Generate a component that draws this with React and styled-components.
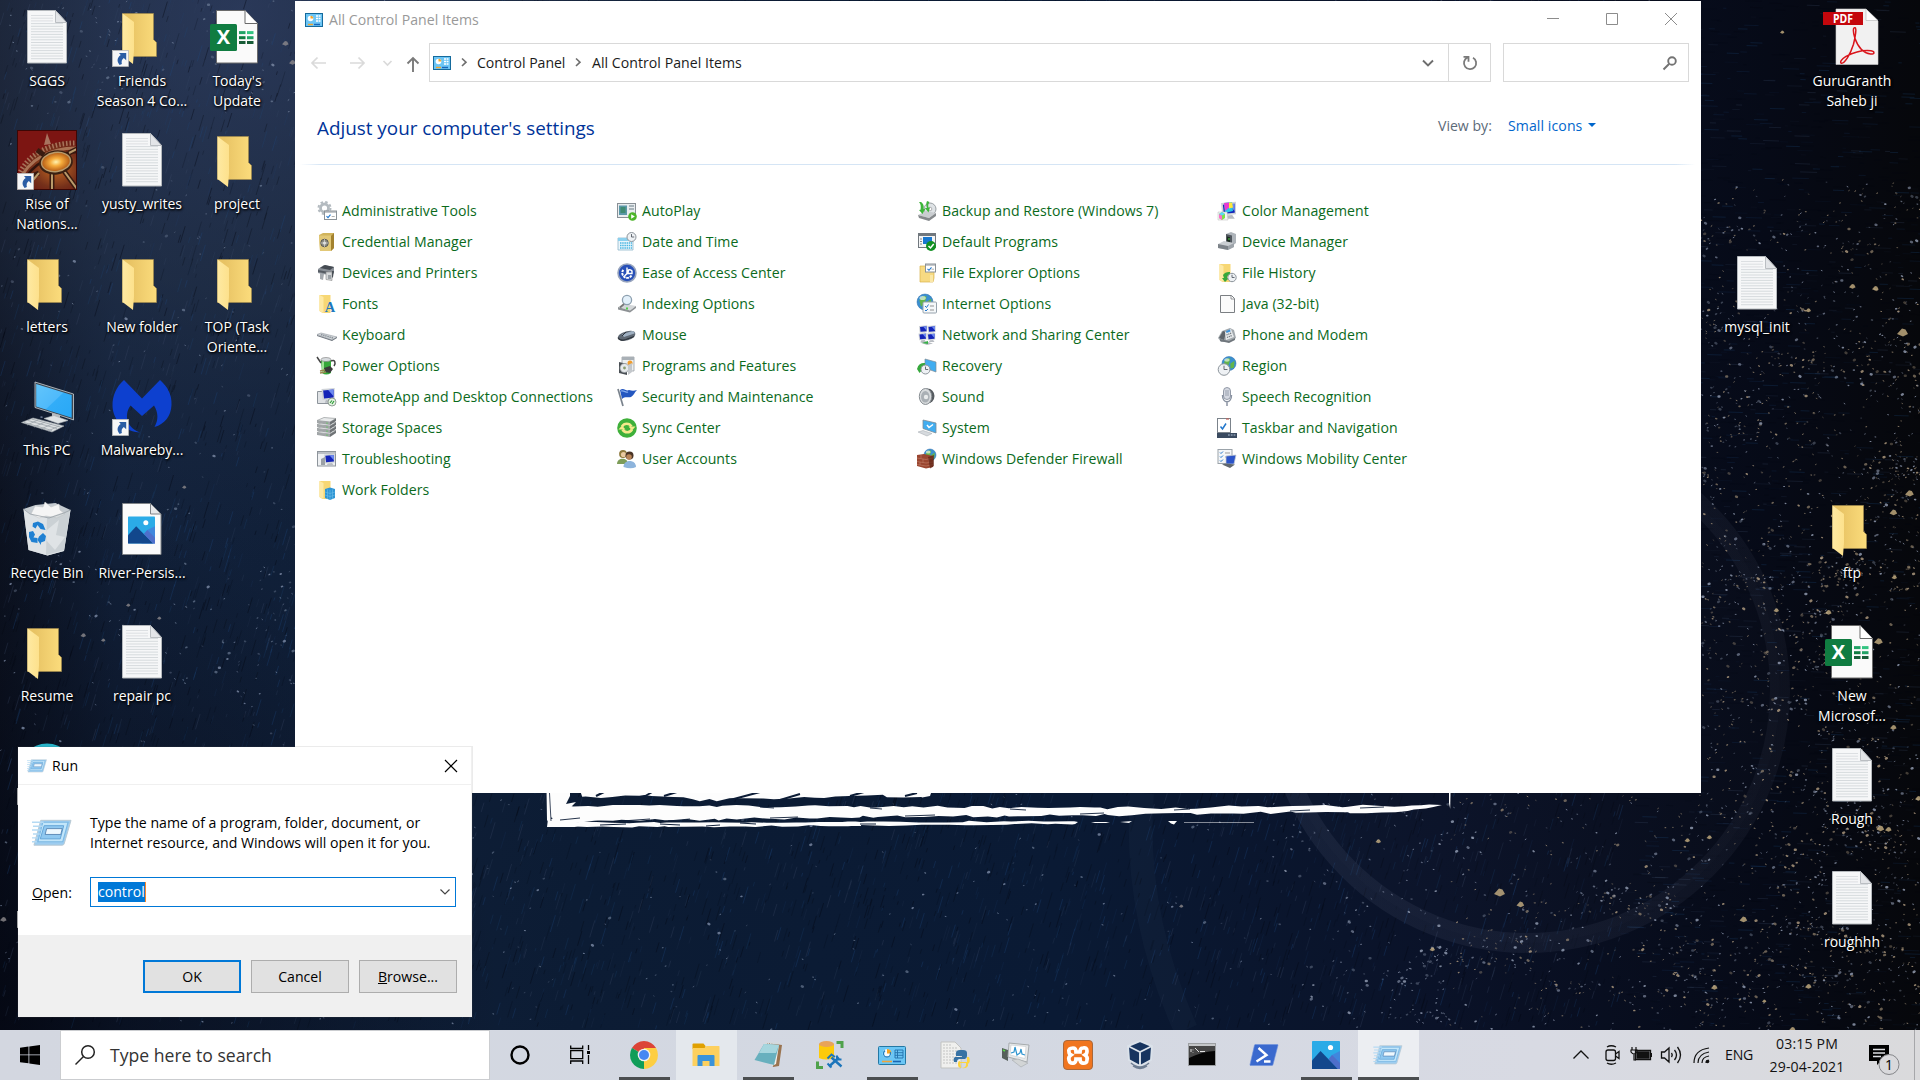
import React from "react";
import styled, { createGlobalStyle } from "styled-components";

const GlobalStyle = createGlobalStyle`
  * { box-sizing: border-box; }
  html, body { margin: 0; padding: 0; overflow: hidden; background: #060a16; }
  body { font-family: "Open Sans", "Noto Sans", sans-serif; font-size: 14.1px; line-height: 20px; color: #000; }
  svg { display: block; overflow: visible; flex: none; }
`;

/* ---------- wallpaper ---------- */

const Screen = styled.div`
  display: flex;
  flex-direction: column;
  width: 1920px;
  height: 1080px;
  overflow: hidden;
  position: relative;
`;

const WallpaperSvg = styled.svg`
  position: absolute;
  inset: 0;
`;

function seeded(seed) {
  let a = seed;
  return () => {
    a = (a + 0x6d2b79f5) | 0;
    let t = Math.imul(a ^ (a >>> 15), 1 | a);
    t = (t + Math.imul(t ^ (t >>> 7), 61 | t)) ^ t;
    return ((t ^ (t >>> 14)) >>> 0) / 4294967296;
  };
}

/* Stars and brush streaks are batched into one path per look. */
function buildSky() {
  const rnd = seeded(77);
  const stars = {};
  const addStar = (x, y, bias) => {
    const size = [0.9, 1.2, 1.7, 2.5][Math.floor(Math.pow(rnd(), bias) * 4)];
    const gold = x > 1450 && rnd() < 0.5;
    const key = `${gold ? "#b5a083" : x > 1250 ? "#98a2b8" : "#7d8ca6"}|${size}|${(0.35 + Math.floor(rnd() * 3) * 0.22).toFixed(2)}`;
    stars[key] = (stars[key] || "") + `M${x.toFixed(1)} ${y.toFixed(1)}l.8 ${((rnd() - 0.5) * 1.2).toFixed(1)}`;
  };
  for (let i = 0; i < 4600; i++) {
    const right = i % 4 !== 0;
    const x = right ? 1250 + Math.pow(rnd(), 0.7) * 670 : rnd() * 1250;
    const y = x > 1690 ? 180 + Math.pow(rnd(), 0.85) * 850 : rnd() * 1030;
    addStar(x, y, 3);
  }
  for (let c = 0; c < 110; c++) {
    const cx = 1400 + Math.pow(rnd(), 0.7) * 520;
    const cy = 190 + rnd() * 830;
    const n = 6 + rnd() * 16;
    for (let i = 0; i < n; i++) {
      addStar(cx + (rnd() + rnd() - 1) * 48, cy + (rnd() + rnd() - 1) * 12, 2.2);
    }
  }
  for (let c = 0; c < 16; c++) {
    const cx = 60 + rnd() * 240;
    const cy = c < 6 ? rnd() * 90 : 560 + rnd() * 130;
    for (let i = 0; i < 9; i++) addStar(cx + (rnd() - 0.5) * 60, cy + (rnd() - 0.5) * 36, 2.6);
  }
  const streaks = {};
  for (let i = 0; i < 13000; i++) {
    const x = rnd() * 1920;
    const y = rnd() * 1030;
    const l = 3 + rnd() * 14;
    const flat = x > 1620;
    const dx = flat ? l : l * 0.3;
    const dy = flat ? l * 0.03 : -l;
    const dark = rnd() < 0.45;
    const color = dark ? "#02060f" : rnd() < 0.6 ? "#1d4a80" : "#3a4a68";
    const key = `${color}|${(0.12 + Math.floor(rnd() * 3) * 0.09 + (dark ? 0.08 : 0) - (flat ? 0.05 : 0)).toFixed(2)}`;
    streaks[key] = (streaks[key] || "") + `M${x.toFixed(1)} ${y.toFixed(1)}l${dx.toFixed(1)} ${dy.toFixed(1)}`;
  }
  return { stars: Object.entries(stars), streaks: Object.entries(streaks) };
}

const sky = buildSky();

/* A ragged horizontal brush band between two interpolated edges. */
function band(seed, edge, jitter) {
  const rnd = seeded(seed);
  const at = (x, k) => {
    for (let i = 1; i < edge.length; i++) {
      const a = edge[i - 1];
      const b = edge[i];
      if (x <= b[0]) return a[k] + ((b[k] - a[k]) * (x - a[0])) / (b[0] - a[0]);
    }
    return edge[edge.length - 1][k];
  };
  const x0 = edge[0][0];
  const x1 = edge[edge.length - 1][0];
  const top = [];
  const bottom = [];
  for (let x = x0; x < x1; x += 5 + rnd() * 14) {
    top.push(`${x.toFixed(1)} ${(at(x, 1) + (rnd() - 0.5) * jitter).toFixed(1)}`);
    bottom.unshift(`${(x + rnd() * 6).toFixed(1)} ${(at(x, 2) + (rnd() - 0.5) * jitter).toFixed(1)}`);
  }
  return `M${top.join("L")}L${x1} ${at(x1, 1)}L${bottom.join("L")}z`;
}

const brush = [
  band(5, [[548, 805, 820], [572, 805.5, 820], [700, 806, 819.5], [860, 806.5, 817], [1000, 807.5, 816], [1150, 808, 814.5], [1300, 806, 812.5], [1400, 806, 812], [1442, 805, 805.5]], 2.8),
  band(9, [[549, 822.5, 826.5], [640, 822.5, 827], [760, 822, 826], [900, 822, 825.5], [1020, 821.5, 824], [1078, 822, 824]], 1.8),
  band(13, [[580, 790, 798], [640, 790, 796], [700, 790, 800], [760, 790, 799], [860, 790, 796], [932, 790, 796.5]], 3),
];

const goldFlecks = [
  [1499, 892, 5], [1520, 904, 3.5], [1909, 493, 4], [1893, 512, 3.5], [1902, 332, 5], [1894, 577, 2.5],
  [1776, 610, 2.5], [1828, 612, 3], [1878, 641, 4], [1893, 727, 3], [1743, 919, 3.5], [1714, 987, 3],
  [1808, 986, 3], [1764, 1001, 2], [1880, 828, 3.5], [1888, 829, 3], [1918, 798, 3], [1709, 837, 2.5],
  [1687, 840, 2.5], [1792, 1029, 3], [1432, 949, 2.5], [1181, 906, 2], [1378, 841, 2.5], [1808, 310, 2.5],
  [1875, 288, 3], [1852, 286, 3], [1782, 32, 2], [285, 43, 3], [292, 62, 3], [250, 54, 2], [3, 919, 3],
  [83, 635, 2.5], [103, 640, 2], [128, 605, 2], [159, 618, 2], [184, 487, 2], [254, 46, 2],
];

const Wallpaper = React.memo(function Wallpaper() {
  return (
    <WallpaperSvg width="1920" height="1080" viewBox="0 0 1920 1080">
      <defs>
        <linearGradient id="skyBase" x1="0" x2="1" y1="0" y2="0">
          <stop offset="0" stopColor="#0c1220" />
          <stop offset="0.06" stopColor="#12213a" />
          <stop offset="0.3" stopColor="#0c1c34" />
          <stop offset="0.55" stopColor="#0a1a34" />
          <stop offset="0.75" stopColor="#0a1228" />
          <stop offset="0.92" stopColor="#060a17" />
          <stop offset="1" stopColor="#06070b" />
        </linearGradient>
        <radialGradient id="skyTop" cx="240" cy="10" r="560" gradientUnits="userSpaceOnUse">
          <stop offset="0" stopColor="#38466a" stopOpacity="0.65" />
          <stop offset="0.5" stopColor="#2b3850" stopOpacity="0.5" />
          <stop offset="1" stopColor="#1d2b45" stopOpacity="0" />
        </radialGradient>
        <radialGradient id="skyCorner" cx="0" cy="1000" r="500" gradientUnits="userSpaceOnUse">
          <stop offset="0" stopColor="#030611" stopOpacity="0.8" />
          <stop offset="1" stopColor="#030611" stopOpacity="0" />
        </radialGradient>
        <linearGradient id="ringFade" x1="0" x2="1"><stop offset="0" stopColor="#8a93b0" stopOpacity="0.1" /><stop offset="1" stopColor="#8a93b0" stopOpacity="0.06" /></linearGradient>
      </defs>
      <rect width="1920" height="1080" fill="url(#skyBase)" />
      <rect width="1920" height="1080" fill="url(#skyTop)" />
      <rect width="1920" height="1080" fill="url(#skyCorner)" />
      {sky.streaks.map(([key, d]) => {
        const [c, o] = key.split("|");
        return <path key={key} d={d} stroke={c} strokeOpacity={o} strokeWidth="1" />;
      })}
      <circle cx="1527" cy="690" r="253" fill="#8a93b0" fillOpacity="0.02" stroke="url(#ringFade)" strokeWidth="20" />
      <path d="M1142 793C1136 870 1150 950 1186 1030" fill="none" stroke="#8a93b0" strokeOpacity="0.04" strokeWidth="24" />
      {sky.stars.map(([key, d]) => {
        const [c, w, o] = key.split("|");
        return <path key={key} d={d} stroke={c} strokeWidth={w} strokeOpacity={o} strokeLinecap="round" />;
      })}
      {goldFlecks.map(([x, y, r], i) => (
        <path key={i} d={`M${x - r} ${y + r * 0.4}l${r} ${-r * 1.1}l${r * 0.7} ${r * 0.2}l${r * 0.5} ${r * 0.9}l${-r} ${r * 0.5}z`} fill={x > 1200 ? "#c9b183" : "#8d8a8c"} opacity="0.8" />
      ))}
      <g fill="#fdfdfd">
        {brush.map((d) => <path key={d} d={d} />)}
        <path d="M546.500 790H570v6l-4 8 10-2-6 6h-14l-7 15-2-3z" />
        <path d="M548 819h60l-40 5 10 3-31 0z" />
        <path d="M1095 822l15 0-4 1-15 0zM1120 822l12-1-3 2zM1168 821l9 0-3 3.500-3-1zM1184 822h70v.600h-70z" />
        <path d="M1449 790h1.600l-.4 19-1.200-6z" />
      </g>
      <g stroke="#0c1c36" fill="none">
        <path d="M549.500 793l1.500 28" strokeWidth="0.800" />
        <path d="M575 798l-6 4M596 796l10-5M640 799l14-8M664 796l16-5M730 800l30-8M780 800l20-6M850 796l14-4M905 796l12-3" strokeWidth="2" />
        <path d="M560 820l20-2M622 821l28-2M690 819l-22 2M770 818l28-1M905 816l30-1M1080 814l24-1M870 808l12 1M1010 809l16 1M1190 809l-16 1M760 807l14 1M1290 811l20-1M1360 808l24-1" strokeWidth="0.900" />
        <path d="M600 825l26-1M660 824l20 1M706 826l14-1M740 823l16 1M860 824l16 0" strokeWidth="1" />
      </g>
    </WallpaperSvg>
  );
});

/* ---------- large desktop icons, 56 x 56 ---------- */

const ShortcutArrow = () => (
  <g>
    <rect x="-1.6" y="42.4" width="16" height="16" fill="#f7f7f7" stroke="#b9b9b9" strokeWidth="0.8" />
    <path d="M5 45h7.2v7.2l-2.4-2.3c-2 1.4-2.6 3.500-1.900 6l-2.300 1c-3-3.400-2.700-7 1.100-9.800z" fill="#2b5da4" />
  </g>
);

const TextDoc = () => (
  <g>
    <path d="M8.500 2.500h28l11 12v40.500h-39z" fill="#f6f7f8" stroke="#b4b8bc" strokeWidth="1" />
    <path d="M12 7.500h22M12 10.200h22M12 12.900h22" stroke="#dcdfe2" strokeWidth="1" />
    {[15.600, 18.300, 21, 23.700, 26.400, 29.100, 31.800, 34.500, 37.200, 39.900, 42.600, 45.300, 48, 50.700].map((y) => (
      <path key={y} d={`M12 ${y}h32`} stroke="#d6dadd" strokeWidth="1" />
    ))}
    <path d="M36.500 2.500v12h11z" fill="#e3e5e8" stroke="#b4b8bc" strokeWidth="0.900" />
  </g>
);

const FolderBig = () => (
  <g>
    <defs>
      <linearGradient id="fBack" x1="0" x2="1"><stop offset="0.200" stopColor="#e8c364" /><stop offset="1" stopColor="#fbdc7c" /></linearGradient>
      <linearGradient id="fFront" x1="0" x2="1"><stop offset="0" stopColor="#fee9a2" /><stop offset="1" stopColor="#fde18c" /></linearGradient>
    </defs>
    <path d="M8.500 5.500h31v26l3 3v14h-34z" fill="url(#fBack)" stroke="#a08a4e" strokeWidth="0.700" />
    <path d="M8.500 5.500l11.500 8.500v28l-1 14-10.500-8z" fill="url(#fFront)" />
  </g>
);

const ExcelDoc = () => (
  <g>
    <path d="M7.500 2.500h28.500l12.500 13v39.500h-41z" fill="#fafafa" stroke="#6a6a6a" />
    <path d="M36 2.500v13h12.500" fill="#fff" stroke="#6a6a6a" />
    <rect x="1" y="16" width="27" height="27" rx="1.500" fill="#107c41" />
    <text x="14.500" y="36.300" textAnchor="middle" fontSize="20" fontWeight="700" fill="#fff">X</text>
    <path d="M30 24.600h6.500" stroke="#21a366" strokeWidth="3" /><path d="M38 24.600h6.500" stroke="#33c481" strokeWidth="3" />
    <path d="M30 29.700h6.500" stroke="#107c41" strokeWidth="3" /><path d="M38 29.700h6.500" stroke="#21a366" strokeWidth="3" />
    <path d="M30 34.500h6.500M38 34.500h6.500" stroke="#185c37" strokeWidth="3" />
  </g>
);

const PdfDoc = () => (
  <g>
    <path d="M12 1h30l12 12v43.500H12z" fill="#f1f1f1" stroke="#d0d0d0" strokeWidth="0.600" />
    <path d="M42 1v11.500h12z" fill="#fff" stroke="#bbb" strokeWidth="0.700" />
    <rect x="-1" y="4" width="40" height="13" fill="#c4070c" />
    <text x="19" y="14.900" textAnchor="middle" fontSize="12" fontWeight="700" fill="#fff" textLength="20" lengthAdjust="spacingAndGlyphs">PDF</text>
    <path d="M31.500 20c-3-1.500-2.500 4.500-.5 10.500 3 8.500 8.500 14.500 15.500 15.500 4.500.600 4.500-2.600.500-3.200-7-.800-17 1.500-25 5.500-5 3-6.500 6.500-4.500 7 3.500.300 9-9.500 12-19 1.800-7.500 2.900-14.500 2-16.300z" fill="none" stroke="#d9151b" strokeWidth="1.500" />
  </g>
);

const RiseOfNations = () => (
  <g>
    <defs>
      <radialGradient id="ronBg" cx="0.650" cy="0.550" r="0.700"><stop offset="0" stopColor="#c46a24" /><stop offset="0.550" stopColor="#75301a" /><stop offset="1" stopColor="#661010" /></radialGradient>
      <radialGradient id="ronEye"><stop offset="0" stopColor="#fff3b0" /><stop offset="0.400" stopColor="#f6ac3c" /><stop offset="1" stopColor="#b35914" /></radialGradient>
      <clipPath id="ronClip"><rect x="-1.500" y="-0.500" width="59" height="59" /></clipPath>
    </defs>
    <g clipPath="url(#ronClip)">
      <rect x="-2" y="-1" width="60" height="60" fill="#7c1512" />
      <path d="M-2 52C4 26 28 8 58 10v50H-2z" fill="url(#ronBg)" />
      <path d="M0 44C8 24 30 11 60 12" fill="none" stroke="#a8735a" strokeWidth="5" strokeDasharray="1.500 2" />
      <path d="M1 49C9 30 30 16 60 17" fill="none" stroke="#a87254" strokeWidth="3" />
      <path d="M4 51C13 34 32 21 60 21" fill="none" stroke="#31140d" strokeWidth="2.500" />
      <path d="M25 14l3-12 4 11z" fill="#a8735f" />
      <path d="M20 42L2 50M33 42v18M45 40l13 18M25 24l-7-5M50 22l8-4" stroke="#3a1b10" strokeWidth="5" />
      <path d="M20 42L8 56M33 42v18M45 40l13 18M50 22l8-4" stroke="#b99a6a" strokeWidth="2" />
      <ellipse cx="37" cy="31.500" rx="17" ry="12" fill="#3a2012" transform="rotate(-8 37 32)" />
      <ellipse cx="37" cy="31" rx="14.500" ry="9.500" fill="url(#ronEye)" stroke="#b99a6a" strokeWidth="1.500" transform="rotate(-8 37 31)" />
    </g>
    <rect x="-1.500" y="-0.500" width="59" height="59" fill="none" stroke="#3c0705" />
    <ShortcutArrow />
  </g>
);

const ThisPc = () => (
  <g>
    <defs><linearGradient id="pcScr" x1="0" y1="0" x2="1" y2="1"><stop offset="0" stopColor="#62c5fb" /><stop offset="0.500" stopColor="#4fbafb" /><stop offset="0.520" stopColor="#32adf8" /><stop offset="1" stopColor="#29a8f6" /></linearGradient></defs>
    <path d="M16 5l38.500 12v26L52 42 16 30.500z" fill="#3d4650" stroke="#c9d0d4" strokeWidth="0.800" />
    <path d="M17.200 7l35.500 11v22.800L17.200 29.500z" fill="url(#pcScr)" />
    <path d="M33 36l8 2v5l-8-2z" fill="#b6bcc0" />
    <path d="M25 41.500l10-3 14 5-10 3z" fill="#dfe3e5" stroke="#a7adb2" strokeWidth="0.600" />
    <path d="M2.500 45.500L14 41l31 8-12 6z" fill="#dcdfe1" stroke="#a0a6ab" strokeWidth="0.600" />
    <path d="M5 45.500l28 8M9 43.500l29 8M12.500 42l29 8M8 48l11-5M15 50l11-5M22 52l11-5M29 54l11-5" stroke="#9ca3a9" strokeWidth="0.800" />
  </g>
);

const Malware = () => (
  <g>
    <path d="M10 3L28 21.500 46 3C54 10 58 18 57.500 28 57 39 51 47 40.500 50c4-7 4-14-.500-21.500L28 39 16.500 28.500C9 39 14 52 26.500 55.500 10 55-1 43-1.500 29-1.700 19 2 10 10 3z" fill="#0d40cf" />
    <ShortcutArrow />
  </g>
);

const RecycleBin = () => (
  <g>
    <path d="M4.500 9l12-4 20-2 15 7-6.500 41-16.500 4.500L9.500 50z" fill="#c5cbd0" />
    <path d="M4.500 9l6.500 5 19 4 15-5 6.500-3-6.500 41-16.500 4.500L9.500 50z" fill="#dfe3e6" />
    <path d="M12 14l4-8 8 1 2-5 6 5 8-3 1 6 5 4-8 4-11-2-7 2z" fill="#f5f5f5" stroke="#c4c8ca" strokeWidth="0.600" />
    <path d="M28 18l-1 37 18-5 6-40zM28 30l12-10-3 15 9 2-10 13-9-10z" fill="#b8bfc4" opacity="0.500" />
    <path d="M4.500 9l6.500 5 19 4 15-5 6.500-3" fill="none" stroke="#9ba2a8" strokeWidth="0.800" />
    <g fill="#1f80d2">
      <path d="M14 23l5-1.500 5 2.500 2.500 6-5-1-3-4-2 3.500-3-2z" />
      <path d="M10 32l4-1 2 3.500-1.500 3 4 .500v5l-6-1-2.500-5z" />
      <path d="M20 36.500l4-3.500 3 3-1 5-4 1.500v2.500l-3.500-5z" />
    </g>
  </g>
);

const PhotoDoc = () => (
  <g>
    <path d="M8.500 3.500h28l10.500 10.500v40.500H8.500z" fill="#fbfbfb" stroke="#808488" />
    <path d="M36.500 3.500V14H47z" fill="#e7e8ea" stroke="#808488" />
    <g transform="translate(14 16.500)"><Mountains size={27} /></g>
  </g>
);

const Mountains = ({ size }) => (
  <g transform={`scale(${size / 28})`}>
    <rect width="28" height="28" rx="0.800" fill="#2babe7" />
    <path d="M28 10v18H14L20 14z" fill="#4a78d8" opacity="0.700" />
    <path d="M0 19.500L8.500 10 26 28H0z" fill="#12478c" />
    <path d="M16.500 18l3.500-4 8 8v6H26z" fill="#4e6fcb" />
    <circle cx="18.500" cy="6.500" r="2.600" fill="#fff" />
  </g>
);

const TealApp = () => (
  <g>
    <circle cx="28" cy="26" r="28.500" fill="#28b3c8" />
    <ShortcutArrow />
  </g>
);

const HiddenShortcut = () => <ShortcutArrow />;
const FolderShortcut = () => (<g><FolderBig /><ShortcutArrow /></g>);

const desktopItems = [
  [1, 1, TextDoc, ["SGGS"]],
  [2, 1, FolderShortcut, ["Friends", "Season 4 Co..."]],
  [3, 1, ExcelDoc, ["Today's", "Update"]],
  [1, 2, RiseOfNations, ["Rise of", "Nations..."]],
  [2, 2, TextDoc, ["yusty_writes"]],
  [3, 2, FolderBig, ["project"]],
  [1, 3, FolderBig, ["letters"]],
  [2, 3, FolderBig, ["New folder"]],
  [3, 3, FolderBig, ["TOP (Task", "Oriente..."]],
  [1, 4, ThisPc, ["This PC"]],
  [2, 4, Malware, ["Malwareby..."]],
  [1, 5, RecycleBin, ["Recycle Bin"]],
  [2, 5, PhotoDoc, ["River-Persis..."]],
  [1, 6, FolderBig, ["Resume"]],
  [2, 6, TextDoc, ["repair pc"]],
  [1, 7, TealApp, []],
  [1, 8, HiddenShortcut, []],
  [20, 1, PdfDoc, ["GuruGranth", "Saheb ji"]],
  [19, 3, TextDoc, ["mysql_init"]],
  [20, 5, FolderBig, ["ftp"]],
  [20, 6, ExcelDoc, ["New", "Microsof..."]],
  [20, 7, TextDoc, ["Rough"]],
  [20, 8, TextDoc, ["roughhh"]],
];

const Desktop = styled.main`
  position: relative;
  height: 1030px;
  display: grid;
  grid-template-columns: repeat(20, 95px);
  grid-template-rows: repeat(8, 123px);
`;

const DesktopItem = styled.div`
  grid-column: ${(p) => p.$col};
  grid-row: ${(p) => p.$row};
  display: flex;
  flex-direction: column;
  align-items: center;
  padding: 8px 1px 0 0;
`;

const DesktopLabel = styled.div`
  margin-top: 7px;
  color: #fff;
  font-size: 14px;
  text-align: center;
  white-space: nowrap;
  text-shadow: 1px 1px 2px #000, 0 1px 3px #000;
`;

/* ---------- windows ---------- */

const WindowFrame = styled.section`
  position: absolute;
  left: ${(p) => p.$x}px;
  top: ${(p) => p.$y}px;
  width: ${(p) => p.$w}px;
  height: ${(p) => p.$h}px;
  background: #fff;
  display: flex;
  flex-direction: column;
`;

const TitleBar = styled.header`
  height: ${(p) => p.$h}px;
  display: flex;
  align-items: center;
  padding: 0 ${(p) => p.$right}px 0 ${(p) => p.$left}px;
`;

const TitleText = styled.h1`
  margin: 0 auto 0 ${(p) => p.$gap}px;
  font: inherit;
  letter-spacing: 0.04px;
  color: ${(p) => p.$color};
`;

const WindowButtons = styled.div`
  display: flex;
  gap: 47px;
  margin-top: -1px;
`;

const NavRow = styled.nav`
  display: flex;
  align-items: center;
  height: 39px;
  margin-top: 5px;
  padding: 0 12px 0 16px;
`;

const NavArrows = styled.div`
  display: flex;
  align-items: center;
  width: 118px;
`;

const AddressBar = styled.div`
  display: flex;
  align-items: center;
  width: 1020px;
  height: 39px;
  border: 1px solid #d9d9d9;
  padding: 0 14px 0 3px;
`;

const Crumb = styled.span`
  width: ${(p) => p.$w}px;
  flex: ${(p) => (p.$grow ? 1 : "none")};
  white-space: nowrap;
  color: #1b1b1b;
  letter-spacing: ${(p) => (p.$grow ? 0.04 : -0.04)}px;
`;

const CrumbChevron = styled.span`
  width: ${(p) => p.$w}px;
  display: flex;
  justify-content: center;
`;

const RefreshButton = styled.button`
  width: 42px;
  height: 39px;
  margin-right: 12px;
  padding: 0;
  border: 1px solid #d9d9d9;
  border-left: 0;
  background: #fff;
  display: grid;
  place-items: center;
`;

const SearchField = styled.div`
  width: 186px;
  height: 39px;
  border: 1px solid #d9d9d9;
  display: flex;
  align-items: center;
  justify-content: flex-end;
  padding-right: 11px;
`;

const HeadingRow = styled.div`
  display: flex;
  align-items: center;
  height: 82px;
  padding: 10px 0 0 22px;
`;

const Heading = styled.h2`
  margin: 0;
  width: 1121px;
  font-size: 18.850px;
  line-height: 28px;
  font-weight: 400;
  color: #003399;
`;

const ViewBy = styled.span`
  width: 70px;
  margin-top: -5px;
  color: #5c6a78;
`;

const ViewLink = styled.a`
  display: flex;
  align-items: center;
  gap: 6px;
  margin-top: -5px;
  color: #0066cc;
  letter-spacing: 0.08px;
`;

const Caret = styled.i`
  border: 4px solid transparent;
  border-top-color: #0066cc;
  border-bottom: 0;
  margin-top: -2px;
`;

const Rule = styled.div`
  height: 1px;
  background: linear-gradient(90deg, #fff 5px, #d5e5f5 26px, #d5e5f5 1380px, #fff 1400px);
`;

const ItemGrid = styled.ul`
  list-style: none;
  margin: 30px 0 0;
  padding: 0 0 0 22px;
  display: grid;
  grid-template-columns: repeat(4, 300px);
  grid-auto-rows: 31px;
`;

const Item = styled.li`
  display: flex;
  align-items: center;
  gap: 5px;
  color: #0b6a1c;
  letter-spacing: 0.05px;
  white-space: nowrap;
`;

/* ---------- control panel item icons, 20 x 20 ---------- */

const CpGlyph = () => (
  <g>
    <rect x="0.500" y="0.500" width="17" height="13" fill="#6cc5f5" stroke="#156a9c" />
    <circle cx="5.500" cy="5.500" r="2.800" fill="#fff" /><path d="M5.500 5.500V2.700a2.800 2.800 0 0 1 2.800 2.800z" fill="#f7a62b" />
    <path d="M11 3h4.500M11 5.500h4.500M11 8h4.500" stroke="#fff" strokeWidth="1.300" strokeDasharray="2 .6" />
    <path d="M3 11.500h5" stroke="#f7a62b" strokeWidth="1.400" /><path d="M9 11.500h6" stroke="#1a66b8" strokeWidth="1.400" />
  </g>
);

const MiniFolder = () => (
  <g><path d="M2.500 1h11v18h-8l-3-2z" fill="#f7d774" /><path d="M2.500 1l4 2v16l-4-2z" fill="#fee9a4" /></g>
);
const MiniMonitor = ({ x = 0, y = 0, s = 1 }) => (
  <g transform={`translate(${x} ${y}) scale(${s})`}><path d="M0 0l12-1v10l-11 1z" fill="#cfd3d8" /><path d="M1.500 1.300L11 .5v7.300L2.300 8.600z" fill="#1424b8" /><path d="M6 .9l5-.4v6z" fill="#6e8af0" /><path d="M4 10l5-.5 2 3H3z" fill="#b8bcc2" /></g>
);
const MiniGlobe = ({ cx, cy, r }) => (
  <g><circle cx={cx} cy={cy} r={r} fill="#3a8fd0" stroke="#2a6da8" strokeWidth="0.500" /><path d={`M${cx - r * 0.7} ${cy - r * 0.2}q${r * 0.3}-${r * 0.7} ${r * 0.9}-${r * 0.5}l-${r * 0.2} ${r * 0.8}-${r * 0.5} ${r * 0.5}zM${cx + r * 0.2} ${cy}l${r * 0.6}-${r * 0.4}-${r * 0.1} ${r}-${r * 0.5} ${r * 0.1}z`} fill="#63b54b" /><ellipse cx={cx - r * 0.3} cy={cy - r * 0.5} rx={r * 0.4} ry={r * 0.25} fill="#fff" opacity="0.600" /></g>
);
const MiniClock = ({ cx, cy, r }) => (
  <g><circle cx={cx} cy={cy} r={r} fill="#eef1f4" stroke="#8c949b" strokeWidth="1" /><path d={`M${cx} ${cy - r * 0.65}V${cy}h${r * 0.6}`} stroke="#555c64" strokeWidth="0.900" fill="none" /></g>
);
const MiniPage = ({ x, y, w, h }) => (
  <g><rect x={x} y={y} width={w} height={h} fill="#fff" stroke="#8b9298" /><path d={`M${x} ${y + 1}h${w}`} stroke="#8b9298" /><path d={`M${x + 2} ${y + h * 0.6}l1.500 1.500 2.500-3`} stroke="#2277cc" strokeWidth="1.100" fill="none" /><path d={`M${x + w * 0.6} ${y + h * 0.65}h${w * 0.25}`} stroke="#999" strokeWidth="0.800" /></g>
);
const MiniServer = ({ y }) => (
  <g><path d={`M0 ${y + 2}l7-3 12 1-6 3.500z`} fill="#e8eaeb" stroke="#85898c" strokeWidth="0.600" /><path d={`M0 ${y + 2}l13 1.500v3L0 ${y + 4.500}z`} fill="#a2a6a8" /><path d={`M13 ${y + 3.500}l6-3.500v2.500l-6 4z`} fill="#6e7275" /><circle cx="10" cy={y + 4.600} r="0.700" fill="#4fd04a" /></g>
);

const glyphs = {
  "Administrative Tools": <g><circle cx="7.500" cy="7" r="4" fill="none" stroke="#b4bbc0" strokeWidth="2.800" /><circle cx="7.500" cy="7" r="6" fill="none" stroke="#b4bbc0" strokeWidth="2" strokeDasharray="2.500 2.210" /><MiniPage x={7.500} y={10} w={12} h={8.500} /></g>,
  "AutoPlay": <g><rect x="0.500" y="2.500" width="18" height="14" fill="#e9edf0" stroke="#899096" /><rect x="2" y="4.500" width="8" height="9.500" fill="#5a98a8" /><rect x="3.500" y="6" width="5" height="6" fill="#3f8a72" /><path d="M12 5h5M12 8h5" stroke="#a8b4ba" strokeWidth="2" /><circle cx="15.500" cy="15.500" r="4.300" fill="#4db52a" /><path d="M14.200 13.300v4.400l3.600-2.200z" fill="#fff" /></g>,
  "Backup and Restore (Windows 7)": <g><circle cx="13" cy="8" r="6" fill="#dfe3e6" stroke="#9aa0a4" /><circle cx="13" cy="8" r="1.800" fill="#fff" stroke="#888" strokeWidth="0.600" /><path d="M1 14l8-4 10 2-7 5z" fill="#c9cdd0" /><path d="M1 14l11 3v3L2 17zM12 17l7-5v3l-7 5z" fill="#85898c" /><path d="M4 1c3 2 3 5 2.500 7l2-.5-3 5.500-3.500-4 1.500-.3C4 6 4 3 2 1zM10 0c-1 2-1 5 0 7l-2 0 3.500 4.500L13 6.500l-1.500.3C11 5 11 3 12.500 1z" fill="#3cb53a" /></g>,
  "Color Management": <g><MiniMonitor x={4} y={2} s={1.25} /><path d="M7 2l8-1 1 9-8 2z" fill="#29c4e8" /><path d="M7 2l5-.5v5L8 10z" fill="#ec3ad0" /><path d="M12 1.500l3 0 1 5-4 1z" fill="#ffe63a" /><path d="M1 11h9l1 8H1z" fill="#f4f4f4" stroke="#bbb" strokeWidth="0.500" /><path d="M2 13l3-2 3 2v4l-3 2-3-2z" fill="#7ee04a" /><path d="M2 13l3 1.500V19l-3-2z" fill="#ff6cc8" /><path d="M5 11l3 2-3 1.500L2 13z" fill="#5cd7f7" /></g>,
  "Credential Manager": <g><path d="M2 3l4-2h11v15l-3 3H3z" fill="#d1b45c" /><path d="M14 4l3-3v15l-3 3z" fill="#a3822f" /><path d="M2 3.500h12V19H3z" fill="#e2c877" /><circle cx="7.500" cy="11" r="3.800" fill="#8b8a82" stroke="#5b5a55" /><circle cx="7.500" cy="11" r="1.500" fill="#e8e8e8" /><path d="M7.500 7v8M3.500 11h8" stroke="#ddd" strokeWidth="0.600" /></g>,
  "Date and Time": <g><path d="M1 6h15v12H1z" fill="#eaf6fc" stroke="#8fb6ca" strokeWidth="0.800" /><path d="M1 6h15v3H1z" fill="#8bd0ee" /><path d="M3 11h12M3 13.500h12M3 16h12" stroke="#49b6e2" strokeWidth="1.600" strokeDasharray="1.500 .7" /><MiniClock cx={14.500} cy={5} r={4.500} /></g>,
  "Default Programs": <g><rect x="1.500" y="1.500" width="17" height="14" fill="#f4f5f6" stroke="#71787e" /><path d="M1 3h18" stroke="#71787e" strokeWidth="2" /><path d="M3 7h2M3 9.500h2M3 12h2" stroke="#888" /><rect x="6" y="5" width="9" height="7" fill="#1878d0" /><circle cx="14" cy="14" r="5" fill="#119022" /><path d="M11.500 14l2 2 3.200-4" stroke="#fff" strokeWidth="1.500" fill="none" /></g>,
  "Device Manager": <g><path d="M9 2l5-2 5 2v9l-4 3-6-2z" fill="#aeb4ba" /><path d="M9 2l6 1.500V13l-6-1.500z" fill="#50575e" /><path d="M10 4.500l3 .7v5l-3-.8z" fill="#1c2a20" /><path d="M12 6v2" stroke="#4fd04a" /><path d="M1 12l6-3 10 2v4l-6 3L1 16z" fill="#caced2" /><path d="M1 12l10 2v4L1 16z" fill="#7c8288" /><path d="M11 14l6-3v4l-6 3z" fill="#9da3a9" /></g>,
  "Devices and Printers": <g><path d="M1 6l6-4 10 2v6l-3 2-9-1-4-1z" fill="#8a9097" /><path d="M3 5l5-3 9 2-4 3z" fill="#454b52" /><path d="M1 7l11 2v2L1 9z" fill="#565c63" /><path d="M3 10l4 1-1 6-3-1z" fill="#a4a9ae" /><path d="M9 9h6v8.500l-6-1z" fill="#d5d8da" stroke="#888" strokeWidth="0.600" /><path d="M11 12h3v4h-3z" fill="#9ba1a6" /><path d="M15 8l2 0-1 6-1 1z" fill="#4a5057" /></g>,
  "Ease of Access Center": <g><circle cx="10" cy="10" r="9" fill="#2850b8" stroke="#97a4bd" strokeWidth="1.600" /><path d="M6.300 6.800A5 5 0 1 0 14.500 12.500" fill="none" stroke="#fff" strokeWidth="1.900" strokeDasharray="2.600 .7" /><path d="M10 4.500v6h3.500M11.500 7q2-1 3.500 1v2.500h-4z" stroke="#fff" strokeWidth="1.400" fill="none" /><path d="M10 10.500l-2.500 2.500" stroke="#fff" strokeWidth="1.400" /></g>,
  "File Explorer Options": <g><path d="M3 3h14v12l-1 4H3z" fill="#f7da82" stroke="#d8b24c" strokeWidth="0.700" /><path d="M13 12h3v7h-3z" fill="#fbe8a8" /><MiniPage x={8.500} y={1} w={10} h={8} /></g>,
  "File History": <g><MiniFolder /><path d="M6 12a7 6 0 0 1 7-3v3c-2 0-3 1-3 3l2 0-4 4-3-4h2z" fill="#36a83c" /><MiniClock cx={15} cy={14.500} r={4.200} /></g>,
  "Fonts": <g><MiniFolder /><text x="13" y="17.500" textAnchor="middle" fontFamily="Liberation Serif" fontSize="14.500" fontWeight="700" fill="#1d78bd">A</text></g>,
  "Indexing Options": <g><path d="M1 13l7-3 11 2-6 4.500z" fill="#d4d7d9" /><path d="M1 13l12 3.500v2L1 15.500zM13 16.500l6-4.500v2l-6 4.500z" fill="#8d9194" /><circle cx="10" cy="6" r="4.600" fill="#e3f0fa" stroke="#8da0b0" strokeWidth="1.300" /><path d="M7 10l-4 3.500" stroke="#777" strokeWidth="1.800" /><path d="M10 13.500v2" stroke="#4fd04a" strokeWidth="2" /></g>,
  "Internet Options": <g><MiniGlobe cx={8} cy={8} r={8} /><rect x="6" y="8" width="13.500" height="11" rx="1" fill="#f5f8fa" stroke="#96a2ac" /><path d="M8 12l1.500 1.500 2-3M8 16l1 1 2-2" stroke="#2277cc" fill="none" /><path d="M13 12h4M13 16h4" stroke="#888" strokeWidth="0.900" /></g>,
  "Java (32-bit)": <g><path d="M3.500 1.500h11l3 3v14h-14z" fill="#fbfbfb" stroke="#7b7f83" /><path d="M14 1.500V5h3.500" fill="none" stroke="#7b7f83" strokeWidth="0.800" /></g>,
  "Keyboard": <g><path d="M0 9.500l4-1.500 16 4-5 3z" fill="#d4d8db" stroke="#9097a0" strokeWidth="0.600" /><path d="M0 10l15 5 5-3v1l-5 3L0 11z" fill="#6d757d" /><path d="M4 9.500l12 3.500" stroke="#8c949c" strokeDasharray="1.500 .7" strokeWidth="1.500" /></g>,
  "Mouse": <g><path d="M1 12c0-3 10-7 14-6 4 0 4 4 2 6-3 3-9 4-12 4-3-1-4-2-4-4z" fill="#5f6873" /><path d="M5 9.500l10-3.500c2 0 3 1 2.500 2.500L7 12z" fill="#9fb0c2" /><path d="M1 12.500c1 3 5 3 8 2l8-3" stroke="#2d333a" strokeWidth="1.300" fill="none" /><path d="M9 7l-4 4" stroke="#2d333a" /></g>,
  "Network and Sharing Center": <g><MiniMonitor x={2} y={1} s={0.680} /><MiniMonitor x={10.500} y={1} s={0.680} /><MiniMonitor x={1.500} y={8.500} s={0.680} /><MiniMonitor x={10} y={8.500} s={0.680} /><path d="M3 17.500l6-1 7 2-6 1.500z" fill="#b8bcc2" /><path d="M5 18l6-2v3z" fill="#38b048" /></g>,
  "Phone and Modem": <g><path d="M1 13l4-7 8-3 4 2 2 8-6 4-9 0z" fill="#a3a9ae" /><path d="M2 13l4-7 3 1-2 8z" fill="#5d646b" /><path d="M8 7l6-3 3 8-8 3z" fill="#e6e9eb" /><path d="M9 6l4-1.500.5 2L9.500 8z" fill="#3b90d8" /><path d="M9.500 10l5-2M10 12.500l5-2" stroke="#6d757c" strokeWidth="1.200" strokeDasharray="1.200 .7" /><path d="M3 14l9 2 6-3v2l-6 3-9-2z" fill="#6f767c" /></g>,
  "Power Options": <g><path d="M4 4q5-3 10 0v13q-5 3-9 0z" fill="#35a83a" /><path d="M6 4v13" stroke="#a9e8a0" strokeWidth="1.800" /><ellipse cx="9" cy="3.500" rx="5" ry="2" fill="#d8dcdf" stroke="#777" strokeWidth="0.600" /><path d="M0 1l4 6M14 5c4-2 5 2 3 5" stroke="#444" strokeWidth="1.500" fill="none" /><path d="M7 12l6-2 3 3-3 4-5-1z" fill="#3b3b3b" /><path d="M3 15l5-1M3 17l6-1" stroke="#9a8850" strokeWidth="1.300" /></g>,
  "Programs and Features": <g><path d="M5 1h12v14H5z" fill="#eceff0" stroke="#9aa0a5" strokeWidth="0.800" /><path d="M5 1h12v3H5z" fill="#a9b0b6" /><circle cx="13" cy="7" r="2.500" fill="#f09c2c" /><path d="M2 6l8 2v11l-8-2z" fill="#4a4f55" /><circle cx="7.500" cy="12" r="4.500" fill="#e6e9eb" stroke="#8f959a" strokeWidth="0.700" /><circle cx="7.500" cy="12" r="1.400" fill="#8a9c70" /><path d="M11 9l4-2v9l-4 3z" fill="#c4c8cc" /></g>,
  "Recovery": <g><path d="M8 3l11 3v10L8 12z" fill="#41adf0" stroke="#7f8c96" strokeWidth="0.700" /><path d="M0 13a7 7 0 0 1 8-6v3c-3 0-4 2-4 3h2l-3.500 4z" fill="#36a83c" /><MiniClock cx={8.500} cy={13.500} r={4.500} /></g>,
  "Region": <g><MiniGlobe cx={12} cy={7.500} r={7} /><MiniClock cx={7} cy={13.500} r={5.800} /></g>,
  "RemoteApp and Desktop Connections": <g><path d="M.5 4.500h14v12H.500z" fill="#dfe2e5" stroke="#8d949b" /><MiniMonitor x={4.500} y={2} s={1.100} /><circle cx="15" cy="15" r="4" fill="#e3f2e1" stroke="#7d8a83" strokeWidth="0.800" /><path d="M13 16l2-2.500M15 17l2-3" stroke="#2f9d38" strokeWidth="1.200" /></g>,
  "Security and Maintenance": <g><path d="M1 2l5 17" stroke="#79828c" strokeWidth="1.700" /><path d="M3 3c4-3 6 2 9 0 3 1 5 1 8 0-3 3-3 5-6 7-3 1-6-1-9 2z" fill="#2457c0" /><path d="M4 4c3-1 5 2 7 1" stroke="#86aef0" strokeWidth="1.200" fill="none" /></g>,
  "Sound": <g><ellipse cx="10.500" cy="9" rx="7" ry="7.500" fill="#565b60" /><ellipse cx="8.500" cy="9.500" rx="6.200" ry="8" fill="#d8dbdd" stroke="#888e93" /><ellipse cx="8.300" cy="9.800" rx="4.300" ry="5.800" fill="#aab0b5" /><circle cx="9" cy="10" r="2.200" fill="#e9ebec" /></g>,
  "Speech Recognition": <g><rect x="6.500" y="0.500" width="7" height="12" rx="3.500" fill="#d5d9e2" stroke="#7c8594" strokeWidth="0.800" /><path d="M8 4h4M8 6h4M8 8h4" stroke="#98a0ae" /><path d="M5.500 8c0 9 9 9 9 0M10 15v4" stroke="#8a93a2" strokeWidth="1.500" fill="none" /></g>,
  "Storage Spaces": <g><MiniServer y={12.500} /><MiniServer y={8.500} /><MiniServer y={4.500} /><MiniServer y={0.500} /></g>,
  "Sync Center": <g><circle cx="10" cy="10" r="9.800" fill="#3fb03a" /><path d="M5 8.500a5.500 5.500 0 0 1 9.500 0M15 11.500a5.500 5.500 0 0 1-9.500 0" fill="none" stroke="#f6e98c" strokeWidth="2.500" /><path d="M11.500 8.500h7l-3.500 4zM8.500 11.500h-7l3.500-4z" fill="#f6e98c" /></g>,
  "System": <g><path d="M6 2l13 3v10L6 10.500z" fill="#41adf0" stroke="#7f8c96" strokeWidth="0.800" /><path d="M10 7l2 2.500 4-3" stroke="#fff" strokeWidth="1.500" fill="none" /><path d="M1 14l5-1.500 9 3-5 2.500z" fill="#d6dade" stroke="#a0a7ad" strokeWidth="0.500" /></g>,
  "Taskbar and Navigation": <g><rect x="0.500" y="0.500" width="13" height="14" fill="#fff" stroke="#7b838b" /><path d="M3.500 8.500l2 2.500 3.500-5.500" stroke="#2277cc" strokeWidth="1.500" fill="none" /><path d="M9 1h3" stroke="#c06058" strokeWidth="1.200" /><path d="M0 15h20v5H0z" fill="#3a4a60" /><path d="M11 17h8" stroke="#8a9ab0" strokeWidth="1.600" strokeDasharray="1.800 1" /></g>,
  "Troubleshooting": <g><rect x="0.500" y="2.500" width="18" height="14.500" fill="#eef0f2" stroke="#8d949b" /><path d="M1 4h18" stroke="#aab0b7" strokeWidth="1.500" /><MiniMonitor x={7} y={5.500} s={0.900} /><path d="M4 10l4-2v8H4z" fill="#9aa0a6" /></g>,
  "User Accounts": <g><circle cx="6" cy="5" r="3.900" fill="#8f7a3e" /><circle cx="6.500" cy="5.500" r="2.600" fill="#e9c9a0" /><path d="M0 15c0-7 11-7 11 0z" fill="#7d9c58" /><circle cx="12.500" cy="6.500" r="4" fill="#4a3426" /><circle cx="12" cy="8" r="2.800" fill="#b88458" /><path d="M6.500 18c0-8 12.500-8 12.500 0q-5 2.500-12.500 0z" fill="#8db4dc" /></g>,
  "Windows Defender Firewall": <g><MiniGlobe cx={13} cy={6} r={6} /><path d="M0 6l7-1 9 2v11l-7 1.500L0 17z" fill="#9a4630" /><path d="M0 9l9 1.500 7-1.500M0 12.500l9 1.500 7-1M0 15.500l9 1.500 7-1.500M4 6v3.500M6 10v3.500M3 13v3M12 9v4" stroke="#c98a74" strokeWidth="0.500" fill="none" /><path d="M11 8l6-2v11l-4 2.500z" fill="#5e2416" opacity="0.700" /></g>,
  "Windows Mobility Center": <g><rect x="1" y="0.500" width="14" height="14" fill="#f4f6f8" stroke="#9ba3aa" /><path d="M3 3.500l1 1 2-2M3 7.500l1 1 2-2M3 11.500l1 1 2-2" stroke="#2277cc" fill="none" /><path d="M8 4h5M8 8h3" stroke="#999" /><path d="M9 7l10-1-2 9-8 0z" fill="#2b54c8" stroke="#c5cbd0" strokeWidth="0.700" /><path d="M5 15.500l4-1 9 1-5 3.500z" fill="#5f676e" /></g>,
  "Work Folders": <g><MiniFolder /><path d="M8 9l5-1.500 5 1.500v9l-5 2-5-2z" fill="#2f95d4" /><path d="M8 12l5 1.500 5-1.500M8 15l5 1.500 5-1.500M13 10v10M10.500 9.500v9.500M15.500 9.500v9.500" stroke="#6bbde8" strokeWidth="0.600" fill="none" /></g>,
};

const itemRows = [
  "Administrative Tools", "AutoPlay", "Backup and Restore (Windows 7)", "Color Management",
  "Credential Manager", "Date and Time", "Default Programs", "Device Manager",
  "Devices and Printers", "Ease of Access Center", "File Explorer Options", "File History",
  "Fonts", "Indexing Options", "Internet Options", "Java (32-bit)",
  "Keyboard", "Mouse", "Network and Sharing Center", "Phone and Modem",
  "Power Options", "Programs and Features", "Recovery", "Region",
  "RemoteApp and Desktop Connections", "Security and Maintenance", "Sound", "Speech Recognition",
  "Storage Spaces", "Sync Center", "System", "Taskbar and Navigation",
  "Troubleshooting", "User Accounts", "Windows Defender Firewall", "Windows Mobility Center",
  "Work Folders",
];

const Chevron = () => (
  <svg width="6" height="10" fill="none" stroke="#6e6e6e" strokeWidth="1.600"><path d="M1 .500l4 3.700L1 8" /></svg>
);

function ControlPanel() {
  return (
    <WindowFrame $x={295} $y={1} $w={1406} $h={792}>
      <TitleBar $h={37} $left={10} $right={24}>
        <svg width="18" height="14"><CpGlyph /></svg>
        <TitleText $gap={6} $color="#999">All Control Panel Items</TitleText>
        <WindowButtons>
          <svg width="12" height="12" stroke="#8c8c8c" fill="none"><path d="M0 5.500h12" /></svg>
          <svg width="12" height="12" stroke="#8c8c8c" fill="none"><path d="M.5.500h11v11H.500z" /></svg>
          <svg width="12" height="12" stroke="#8c8c8c" fill="none"><path d="M0 0l12 12M12 0L0 12" /></svg>
        </WindowButtons>
      </TitleBar>
      <NavRow>
        <NavArrows>
          <svg width="118" height="20" fill="none" strokeWidth="1.700">
            <path d="M15 10H1M6.500 4.500L1 10l5.500 5.500M39 10h14M47.500 4.500L53 10l-5.500 5.500" stroke="#dadada" />
            <path d="M72.500 8l4 4 4-4" stroke="#dadada" />
            <path d="M102 19V5M96.500 10.500L102 5l5.500 5.500" stroke="#7a7a7a" strokeWidth="1.900" />
          </svg>
        </NavArrows>
        <AddressBar>
          <svg width="18" height="14"><CpGlyph /></svg>
          <CrumbChevron $w={26}><Chevron /></CrumbChevron>
          <Crumb $w={87}>Control Panel</Crumb>
          <CrumbChevron $w={28}><Chevron /></CrumbChevron>
          <Crumb $grow>All Control Panel Items</Crumb>
          <svg width="12" height="8" fill="none" stroke="#6e6e6e" strokeWidth="1.900"><path d="M1 1.500l5 5 5-5" /></svg>
        </AddressBar>
        <RefreshButton>
          <svg width="16" height="16" fill="none" stroke="#7a7a7a" strokeWidth="1.800"><path d="M11 2.700a6.100 6.100 0 1 1-5.500-.2M1.500 1.800h5v5" /></svg>
        </RefreshButton>
        <SearchField>
          <svg width="14" height="14" fill="none" stroke="#737373" strokeWidth="1.900"><circle cx="9" cy="5" r="3.800" /><path d="M6 8l-5.500 5.500" /></svg>
        </SearchField>
      </NavRow>
      <HeadingRow>
        <Heading>Adjust your computer's settings</Heading>
        <ViewBy>View by:</ViewBy>
        <ViewLink>Small icons<Caret /></ViewLink>
      </HeadingRow>
      <Rule />
      <ItemGrid>
        {itemRows.map((name) => (
          <Item key={name}>
            <svg width="20" height="20">{glyphs[name]}</svg>
            {name}
          </Item>
        ))}
      </ItemGrid>
    </WindowFrame>
  );
}

/* ---------- run dialog ---------- */

const RunGlyph = () => (
  <g>
    <path d="M9 1h31l-7 24q-.5 1.500-2 1.500H2z" fill="#9dcdf0" stroke="#b9c8d2" strokeWidth="1" />
    <path d="M11 3h26l-5.500 20H6z" fill="#c3e6fa" stroke="#7db9e4" strokeWidth="1.200" />
    <path d="M12.500 6.500h20l-3.500 13.500H8.500z" fill="#8fc8f0" stroke="#5b9fd4" strokeWidth="0.900" />
    <path d="M15 9.500h16l-1.500 6H13.500z" fill="#eef8fe" stroke="#4775a8" strokeWidth="0.800" />
    <path d="M0 3h12M1 7h10M0 11h9M1 15h7M0 19h6M0 23h5" stroke="#b5daf3" strokeWidth="1.500" />
  </g>
);

const DialogBody = styled.div`
  flex: 1;
  border-top: 1px solid #f0f0f0;
  padding: 28px 15px 0 14px;
`;

const RunPrompt = styled.div`
  display: flex;
  gap: 18px;
  align-items: center;
  white-space: nowrap;
  letter-spacing: 0.02px;
`;

const OpenRow = styled.label`
  display: flex;
  align-items: center;
  margin-top: 24px;
`;

const OpenLabel = styled.span`
  width: 58px;
  padding-top: 1px;
`;

const OpenField = styled.div`
  flex: 1;
  height: 30px;
  border: 1px solid #0078d7;
  display: flex;
  align-items: center;
  justify-content: space-between;
  padding: 0 5px 0 7px;
`;

const Selection = styled.span`
  background: #0078d7;
  color: #fff;
  height: 20px;
  margin-top: -1px;
  border-right: 1px solid #ff8728;
`;

const DialogFooter = styled.footer`
  height: 82px;
  background: #f0f0f0;
  display: flex;
  gap: 10px;
  padding: 25px 0 0 125px;
`;

const Button = styled.button`
  width: 98px;
  height: 33px;
  padding: 0;
  font: inherit;
  color: #000;
  background: #e1e1e1;
  border: ${(p) => (p.$primary ? "2px solid #0078d7" : "1px solid #adadad")};
`;

const DialogFrame = styled(WindowFrame)`
  outline: 1px solid rgba(90, 90, 90, 0.12);
  border-right: 1px solid #f0f0f0;
  z-index: 2;
`;

function RunDialog() {
  return (
    <DialogFrame $x={18} $y={747} $w={454} $h={270}>
      <TitleBar $h={37} $left={9} $right={14}>
        <svg width="20" height="14" viewBox="0 0 41 28"><RunGlyph /></svg>
        <TitleText $gap={5} $color="#000">Run</TitleText>
        <svg width="12" height="12" stroke="#000" strokeWidth="1.200"><path d="M0 0l12 12M12 0L0 12" /></svg>
      </TitleBar>
      <DialogBody>
        <RunPrompt>
          <svg width="40" height="28" viewBox="0 0 41 28"><RunGlyph /></svg>
          <div>Type the name of a program, folder, document, or<br />Internet resource, and Windows will open it for you.</div>
        </RunPrompt>
        <OpenRow>
          <OpenLabel><u>O</u>pen:</OpenLabel>
          <OpenField>
            <Selection>control</Selection>
            <svg width="10" height="6" fill="none" stroke="#444" strokeWidth="1.200"><path d="M.5.500L5 5 9.500.500" /></svg>
          </OpenField>
        </OpenRow>
      </DialogBody>
      <DialogFooter>
        <Button $primary>OK</Button>
        <Button>Cancel</Button>
        <Button><u>B</u>rowse...</Button>
      </DialogFooter>
    </DialogFrame>
  );
}

/* ---------- taskbar ---------- */

const TaskbarRoot = styled.footer`
  position: relative;
  height: 50px;
  display: flex;
  background: linear-gradient(90deg, #d3d7e0, #d3d8e2 50%, #d8dae3 80%, #dadadc);
`;

const StartButton = styled.div`
  width: 60px;
  display: grid;
  place-items: center;
`;

const SearchBox = styled.div`
  width: 430px;
  height: 50px;
  background: #fff;
  border: 1px solid #cbcdd0;
  display: flex;
  align-items: center;
  gap: 15px;
  padding-left: 14px;
  font-size: 17.600px;
  color: #333;
`;

const TaskButton = styled.div`
  width: 61px;
  margin-right: 1px;
  display: grid;
  place-items: center;
  padding-right: ${(p) => p.$nudge || 2}px;
  background: ${(p) => (p.$bg ? p.$bg : "transparent")};
  box-shadow: ${(p) => (p.$full ? "inset 0 -3px #4b4e50" : "none")};
  ${(p) => p.$running && `
    background: linear-gradient(#4b4e50, #4b4e50) 5px 100% / 51px 3px no-repeat;
  `}
`;

const Tray = styled.div`
  margin-left: auto;
  display: flex;
  align-items: center;
  color: #111;
`;

const Language = styled.span`
  width: 44px;
  margin-left: 16px;
  letter-spacing: -0.2px;
`;

const Clock = styled.div`
  width: 76px;
  text-align: center;
  line-height: 23px;
  white-space: nowrap;
  letter-spacing: 0.15px;
`;

const Notifications = styled.div`
  margin: 2px 0 0 24px;
`;

const ShowDesktop = styled.div`
  width: 6px;
  height: 50px;
  margin-left: 13px;
  border-left: 1px solid #a6a7aa;
`;

const taskIcons = [
  { name: "chrome", running: true, art: <svg width="28" height="28" viewBox="0 0 28 28"><path d="M14 14L1.900 7A14 14 0 0 1 26.100 7z" fill="#dc4437" /><path d="M14 14L1.900 7A14 14 0 0 0 14 28l6-10.500z" fill="#109d58" /><path d="M14 14L14 28A14 14 0 0 0 26.100 7H14z" fill="#fdce42" /><path d="M1.900 7L8.500 18l6-1z" fill="#109d58" /><circle cx="14" cy="14" r="6.300" fill="#f1f1f1" /><circle cx="14" cy="14" r="5" fill="#4587f3" /></svg> },
  { name: "explorer", bg: "#e4e8ed", art: <svg width="28" height="24"><path d="M.5 1.500q0-1 1-1h10l2 2.500v3H.500z" fill="#e0a000" /><path d="M.5 5h12l2-2H27q.5 0 .500.800V23H.500z" fill="#fdd05e" /><path d="M5.500 23V13q0-1 1-1h15q1 0 1 1v10h-5v-5h-7v5z" fill="#3a93da" /></svg> },
  { name: "notepad", running: true, art: <svg width="28" height="28"><path d="M13 2l15 2-3 21-6 1z" fill="#9a7450" /><path d="M14 3l11 1-3 19-4 2z" fill="#f2f2ee" /><path d="M10 3l15 1-5 20L.500 19z" fill="#68b0be" /><path d="M10 3l15 1-3 8L5 12z" fill="#a6d6de" /><path d="M11 2h15" stroke="#d5dada" strokeWidth="2" strokeDasharray="1.500 1" /></svg> },
  { name: "database-tools", art: <svg width="30" height="30"><path d="M4 4v14q7 3 15 0V4z" fill="#fdca0a" /><ellipse cx="11.500" cy="4" rx="7.500" ry="3" fill="#e8a35a" /><path d="M21.500 2.500H27V8M2.500 21.500v6H8" fill="none" stroke="#4fa24b" strokeWidth="3" /><path d="M14 26.500l10-9M16.500 17.500l10 9" stroke="#1c75bb" strokeWidth="2.400" /><path d="M12.500 18.500l4-4 3.500 2.500M22 15.500v4h4.500M12.500 23.500l4 4" stroke="#1c75bb" strokeWidth="2" fill="none" /></svg> },
  { name: "control-panel", running: true, art: <svg width="28" height="19"><rect x="0.500" y="0.500" width="27" height="18" rx="1" fill="#6bc6f5" stroke="#2478a4" /><circle cx="9" cy="7.500" r="4.300" fill="#f7fbfd" /><path d="M9 7.500V3a4.500 4.500 0 0 1 4.500 4.500z" fill="#f5a423" /><circle cx="9" cy="7.500" r="3.500" fill="none" stroke="#1b7fc4" strokeWidth="1.300" strokeDasharray="14 6" /><path d="M17 4h8v8h-8zM17 6.700h8M17 9.300h8M19.500 4v8" fill="none" stroke="#2271ac" strokeWidth="0.900" /><path d="M4 15.500h10" stroke="#f1a43a" strokeWidth="1.600" /><path d="M15 15.500h8" stroke="#1c66b2" strokeWidth="1.600" /></svg> },
  { name: "python", art: <svg width="28" height="28"><path d="M1 1h14l6 6v20H1z" fill="#f0f0ee" stroke="#c2c3c1" /><path d="M3 4h9M3 7h14M3 10h14M3 13h14M3 16h14M3 19h14M3 22h14" stroke="#c3c4c3" strokeDasharray="2 1" /><path d="M20 9q-4 0-4 3v3h6v1h-7q-2 1-1 5h3q0-3 3-3h5q2-1 2-3v-3q0-3-4-3z" fill="#3772a4" /><path d="M21 27q5 0 5-3v-2h-6v-1h7v-5h2q2 5-1 7v2q-2 3-6 2-4 0-4-3v-2q0-2 2-2" fill="#fdd43e" /></svg> },
  { name: "performance", art: <svg width="28" height="26"><path d="M0 6l6 2v11l-6-3z" fill="#56605a" /><path d="M7 1l20 2-2 17L6 15z" fill="#e7e9ea" stroke="#a5aaad" /><path d="M9 3l15 1.500-1 12L8 13z" fill="#fff" stroke="#c4cace" strokeWidth="0.600" /><path d="M9 11l3-1 1-5 2 8 3-2 1-4 1 5 3 1" stroke="#2c93cf" fill="none" strokeWidth="1.200" /><path d="M10 18l6-1 10 4-7 4z" fill="#d2d5d6" stroke="#a5aaad" strokeWidth="0.600" /><path d="M1 8l2 1" stroke="#5bd648" strokeWidth="1.500" /></svg> },
  { name: "xampp", art: <svg width="30" height="30"><rect x="0.500" y="0.500" width="29" height="29" rx="3.500" fill="#f0751f" stroke="#a8683b" /><path d="M10 8q-5 0-4 4 0 2 2 3-3 2-2 5 1 4 5 3 2-1 2-4h4q0 3 2 4 5 1 5-3 1-3-2-5 2-1 2-4 0-4-4-3-3 0-3 4h-4q0-4-3-4z" fill="none" stroke="#fff" strokeWidth="3.700" /></svg> },
  { name: "virtualbox", art: <svg width="26" height="30"><path d="M13 1l12 5-1 14-11 6L2 20 1 6z" fill="#17345f" /><path d="M1 6l12 6 12-6M13 12v14M1 6l1 14 11 6 11-6 1-14L13 1z" stroke="#dbe2ea" strokeWidth="1.900" fill="none" /><path d="M4 23q9 8 18 0M6 26q7 5 14 0" stroke="#6e7d92" fill="none" strokeWidth="1.500" /></svg> },
  { name: "cmd", art: <svg width="28" height="24"><rect x="0.500" y="0.500" width="27" height="22" fill="#050505" stroke="#9c9fa2" /><path d="M1 2h26" stroke="#c4c6c8" strokeWidth="2" /><path d="M1 3h26v5Q16 8 1 15z" fill="#464646" /><path d="M3 6v3M5 6.500v.800M5 9v.500M7 5l4 4M12 8.500h5" stroke="#e2e2e2" /></svg> },
  { name: "powershell", art: <svg width="28" height="22"><path d="M5 .500h22.500q.5 0 .500.700L23 20.500q-.2 1-1 1H.500q-.7 0-.5-1L4.500 1z" fill="#3a69ce" stroke="#6f92dd" strokeWidth="0.600" /><path d="M8.500 4l8 7-10 6.500M14 17.500h6.500" fill="none" stroke="#fff" strokeWidth="2.400" /></svg> },
  { name: "photos", running: true, art: <svg width="28" height="28"><Mountains size={28} /></svg> },
  { name: "run", bg: "#eceef2", full: true, art: <svg width="30" height="20" viewBox="0 0 41 28"><RunGlyph /></svg> },
];

function Taskbar() {
  return (
    <TaskbarRoot>
      <StartButton>
        <svg width="20" height="20"><path d="M0 2.800L8.500 1.600v7.900H0zM9.300 1.500L20 0v9.500H9.300zM0 10.300h8.500v8L0 17.200zM9.300 10.300H20V20L9.300 18.500z" fill="#000" /></svg>
      </StartButton>
      <SearchBox>
        <svg width="20" height="20" fill="none" stroke="#222" strokeWidth="1.500"><circle cx="13" cy="7" r="6.300" /><path d="M8.500 11.500L.5 19.500" /></svg>
        Type here to search
      </SearchBox>
      <TaskButton><svg width="20" height="20"><circle cx="10" cy="10" r="8.500" fill="none" stroke="#000" strokeWidth="2.400" /></svg></TaskButton>
      <TaskButton $nudge={5}>
        <svg width="20" height="20" fill="none" stroke="#000" strokeWidth="1.300"><path d="M.7.500v3h12V.500M.7 19v-3h12v3M.7 5.700h12v8H.700zM18.500 0v5M18.500 10v9" /><path d="M17 6h3v3h-3z" fill="#000" stroke="none" /></svg>
      </TaskButton>
      {taskIcons.map((t) => (
        <TaskButton key={t.name} $running={t.running} $bg={t.bg} $full={t.full}>{t.art}</TaskButton>
      ))}
      <Tray>
        <svg width="136" height="24" fill="none" stroke="#111" strokeWidth="1.300">
          <path d="M.5 15.500L8 8l7.500 7.500" />
          <rect x="33" y="7" width="9.500" height="10.500" rx="2" /><path d="M42.500 11l3.500-2.500v7L42.500 13M34 4q4-2.500 9 0M34 20q4 2.500 9 0" />
          <path d="M62.500 7.500h15v9h-15z" /><path d="M64 9h12v6H64z" fill="#111" /><path d="M78 10v4" strokeWidth="2" /><path d="M59 4v3M63 4v3M58 7h6v2q-3 4-6 0zM61 11v6h2" strokeWidth="1.200" />
          <path d="M88.500 9h3l4.500-4v14l-4.500-4h-3zM98.500 10q1.500 2 0 4M101.500 7q4 5 0 10M104.500 4q6 8 0 16" />
          <path d="M121 20Q121 7 136 5M125 20q0-9 11-11M129 20q0-6 7-7M133 20q0-2 3-3" strokeWidth="1.200" /><circle cx="134.500" cy="18.500" r="1.800" fill="#111" stroke="none" />
        </svg>
        <Language>ENG</Language>
        <Clock>03:15 PM<br />29-04-2021</Clock>
        <Notifications>
          <svg width="32" height="36">
            <path d="M0 7h20v16H12l-4 4v-4H0z" fill="#000" /><path d="M4 11.500h12M4 15h12M4 18.500h8" stroke="#dcdde1" strokeWidth="1.300" />
            <circle cx="20" cy="26.500" r="10" fill="#d9d9dc" stroke="#85868a" /><text x="20" y="31.500" textAnchor="middle" fontSize="14" fill="#000">1</text>
          </svg>
        </Notifications>
        <ShowDesktop />
      </Tray>
    </TaskbarRoot>
  );
}

export default function App() {
  return (
    <Screen>
      <GlobalStyle />
      <Wallpaper />
      <Desktop>
        {desktopItems.map(([col, row, Art, lines]) => (
          <DesktopItem key={`${col}-${row}`} $col={col} $row={row}>
            <svg width="56" height="56"><Art /></svg>
            <DesktopLabel>{lines.map((l) => <div key={l}>{l}</div>)}</DesktopLabel>
          </DesktopItem>
        ))}
        <ControlPanel />
        <RunDialog />
      </Desktop>
      <Taskbar />
    </Screen>
  );
}
